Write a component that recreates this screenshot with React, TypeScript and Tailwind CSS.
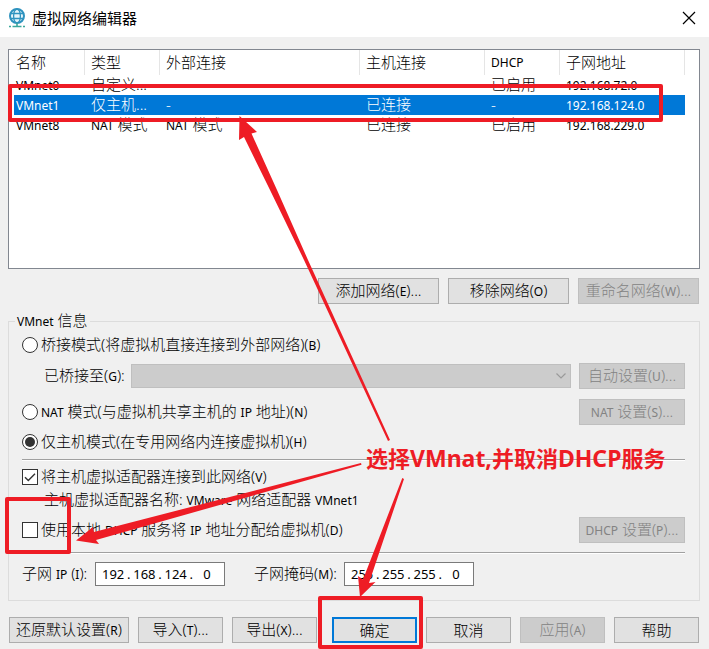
import type { ButtonHTMLAttributes, ReactNode } from "react";

/** Sets Latin letters and digits a little smaller than the Chinese text around them. */
function T({ children }: { children: string }) {
  return (
    <>
      {children.split(/([A-Za-z0-9][A-Za-z0-9.]*)/).map((part, i) =>
        i % 2 === 1 ? (
          <span key={i} className="text-[12px] font-normal">
            {part}
          </span>
        ) : (
          part
        ),
      )}
    </>
  );
}

type BtnProps = ButtonHTMLAttributes<HTMLButtonElement> & { label: string; primary?: boolean };

function Btn({ label, primary, className = "", ...rest }: BtnProps) {
  const look = primary
    ? "border-2 border-[#0078d7] bg-[#e1e1e1]"
    : "border border-[#adadad] bg-[#e1e1e1] disabled:border-[#bfbfbf] disabled:bg-[#cccccc] disabled:text-[#838383]";
  return (
    <button
      type="button"
      className={`flex h-[26px] items-center justify-center whitespace-nowrap leading-5 ${look} ${className}`}
      {...rest}
    >
      <span>
        <T>{label}</T>
      </span>
    </button>
  );
}

function Radio({ label, checked }: { label: string; checked?: boolean }) {
  return (
    <label className="flex items-center gap-[3px] whitespace-nowrap">
      <span className="relative flex size-4 items-center justify-center">
        <input
          type="radio"
          name="mode"
          defaultChecked={checked}
          className="peer size-4 appearance-none rounded-full border border-[#333333] bg-white"
        />
        <span className="pointer-events-none absolute hidden size-[10px] rounded-full bg-[#333333] peer-checked:block" />
      </span>
      <span>
        <T>{label}</T>
      </span>
    </label>
  );
}

function Check({ label, checked }: { label: string; checked?: boolean }) {
  return (
    <label className="flex items-center gap-[3px] whitespace-nowrap">
      <span className="relative flex size-4 items-center justify-center">
        <input
          type="checkbox"
          defaultChecked={checked}
          className="peer size-4 appearance-none border border-[#333333] bg-white"
        />
        <svg
          viewBox="0 0 16 16"
          className="pointer-events-none absolute hidden size-4 peer-checked:block"
          fill="none"
          stroke="#333333"
          strokeWidth="1.4"
        >
          <path d="M3 8.2 6.3 11.5 13 4.8" />
        </svg>
      </span>
      <span>
        <T>{label}</T>
      </span>
    </label>
  );
}

function IpField({ label, parts }: { label: string; parts: string[] }) {
  return (
    <div
      role="group"
      aria-label={label}
      className="flex h-6 w-[130px] items-center border border-[#7a7a7a] bg-white px-1 text-[13px] font-normal"
    >
      {parts.map((part, i) => (
        <span key={i} className="contents">
          {i > 0 && <span className="w-[5px] text-center">.</span>}
          <input
            aria-label={`${label} ${i + 1}`}
            defaultValue={part}
            className="h-5 w-0 flex-1 bg-transparent text-center outline-none"
          />
        </span>
      ))}
    </div>
  );
}

function Row({ className, children }: { className: string; children: ReactNode }) {
  return <div className={`flex items-center ${className}`}>{children}</div>;
}

function Rule({ className }: { className: string }) {
  return <hr className={`h-[2px] border-t border-b border-t-[#a0a0a0] border-b-white ${className}`} />;
}

const columns = [
  { title: "名称", width: "w-[71px]" },
  { title: "类型", width: "w-[75px]" },
  { title: "外部连接", width: "w-[200px]" },
  { title: "主机连接", width: "w-[125px]" },
  { title: "DHCP", width: "w-[75px]" },
  { title: "子网地址", width: "w-[125px]" },
];

const networks = [
  ["VMnet0", "自定义...", "", "", "已启用", "192.168.72.0"],
  ["VMnet1", "仅主机...", "-", "已连接", "-", "192.168.124.0"],
  ["VMnet8", "NAT 模式", "NAT 模式", "已连接", "已启用", "192.168.229.0"],
];

function GlobeIcon() {
  return (
    <svg viewBox="0 0 18 20" className="h-5 w-[18px]" fill="none">
      <circle cx="9" cy="8" r="7" fill="#e6f4fa" stroke="#2f93bf" strokeWidth="2" />
      <ellipse cx="9" cy="8" rx="3.4" ry="7" stroke="#2f93bf" strokeWidth="1.3" />
      <path d="M2 5.5h14M2 10.500h14" stroke="#2f93bf" strokeWidth="1.3" />
      <path d="M9 15v3" stroke="#3aa79b" strokeWidth="1.6" />
      <path d="M1 18.500h2M4.500 18.500h9M15 18.500h2" stroke="#3aa79b" strokeWidth="1.6" />
    </svg>
  );
}

function Annotations() {
  return (
    <div className="pointer-events-none absolute inset-0 overflow-hidden">
      <svg width="709" height="649" viewBox="0 0 709 649" className="absolute top-0 left-0">
        <g fill="none" stroke="#ee1c25" strokeWidth="4" strokeLinejoin="round">
          <rect x="10" y="86" width="651" height="34" />
          <rect x="7" y="499" width="62" height="53" />
          <rect x="320" y="598" width="101" height="49" />
        </g>
        <g fill="#ee1c25">
          <path d="M239.5 116 257 132 251.500 133.500 277 190 308 260 390 440 388 441 304 260 270 190 244 137 239 140Z" />
          <path d="M76 540.500 93 527 94 532 361 463 361.500 464.800 96 540 99 544Z" />
          <path d="M360 597 358 576 363 579.500 402.300 478 404 479 369 583 375.500 582Z" />
        </g>
      </svg>
      <p className="absolute top-[444px] left-[366px] text-[22px] leading-7 font-bold whitespace-nowrap text-[#ee1c25]">
        选择<span className="text-[23px]">VMnat,</span>并取消<span className="text-[23px]">DHCP</span>服务
      </p>
    </div>
  );
}

export default function App() {
  return (
    <div className="relative min-h-screen bg-[#f0f0f0] font-['Noto_Sans','Noto_Sans_CJK_SC',sans-serif] text-[15px] leading-5 font-light text-black">
      <header className="flex h-[37px] items-center bg-white pr-3 pb-[2px] pl-2">
        <GlobeIcon />
        <h1 className="ml-[6px] flex-1 font-normal">虚拟网络编辑器</h1>
        <button type="button" aria-label="关闭" className="flex size-4 items-center justify-center">
          <svg viewBox="0 0 14 14" className="size-[14px]" stroke="#000" strokeWidth="1.2">
            <path d="M1 1 13 13M13 1 1 13" />
          </svg>
        </button>
      </header>

      <main className="pt-3 pr-[10px] pl-[9px]">
        <div className="-mx-px h-[220px] overflow-hidden border border-[#828790] bg-white pl-[5px]">
          <table className="w-[671px] table-fixed border-separate border-spacing-0 text-left">
            <thead>
              <tr className="h-[25px]">
                {columns.map((c) => (
                  <th
                    key={c.title}
                    className={`border-r border-[#e5e5e5] p-0 pb-[2px] pl-[6px] font-light whitespace-nowrap first:pl-[2px] ${c.width}`}
                  >
                    <T>{c.title}</T>
                  </th>
                ))}
              </tr>
            </thead>
            <tbody>
              {networks.map((row, r) => (
                <tr key={row[0]} className={r === 1 ? "h-5 bg-[#0078d7] text-white" : "h-5"}>
                  {row.map((cell, i) => (
                    <td key={i} className="h-5 p-0 pl-[6px] leading-[18px] whitespace-nowrap first:pl-[2px]">
                      <div className="h-5">
                        <T>{cell}</T>
                      </div>
                    </td>
                  ))}
                </tr>
              ))}
            </tbody>
          </table>
        </div>

        <div className="mt-[9px] flex justify-end gap-[9px]">
          <Btn label="添加网络(E)..." className="w-[121px]" />
          <Btn label="移除网络(O)" className="w-[121px]" />
          <Btn label="重命名网络(W)..." className="w-[121px]" disabled />
        </div>

        <fieldset className="-mx-px mt-[7px] border border-[#dcdcdc] pr-[14px] pb-[6px] pl-[13px]">
          <legend className="-ml-[7px] h-5 px-[2px] leading-[18px]">
            <T>VMnet 信息</T>
          </legend>

          <Row className="h-7">
            <Radio label="桥接模式(将虚拟机直接连接到外部网络)(B)" />
          </Row>
          <Row className="h-[34px] pl-[22px]">
            <label htmlFor="bridge" className="w-[87px] whitespace-nowrap">
              <T>已桥接至(G):</T>
            </label>
            <div className="relative flex flex-1">
              <select
                id="bridge"
                disabled
                className="h-6 w-full appearance-none border border-[#bfbfbf] bg-[#cccccc] opacity-100"
              />
              <svg
                viewBox="0 0 12 8"
                className="pointer-events-none absolute top-2 right-1 h-2 w-3"
                fill="none"
                stroke="#9a9a9a"
                strokeWidth="1.2"
              >
                <path d="M1.500 1.500 6 6 10.500 1.500" />
              </svg>
            </div>
            <Btn label="自动设置(U)..." className="ml-2 w-[106px]" disabled />
          </Row>
          <Row className="h-[38px] justify-between">
            <Radio label="NAT 模式(与虚拟机共享主机的 IP 地址)(N)" />
            <Btn label="NAT 设置(S)..." className="w-[106px]" disabled />
          </Row>
          <Row className="h-[22px]">
            <Radio label="仅主机模式(在专用网络内连接虚拟机)(H)" checked />
          </Row>
          <Rule className="mt-[6px] mb-[3px]" />
          <Row className="h-[26px]">
            <Check label="将主机虚拟适配器连接到此网络(V)" checked />
          </Row>
          <Row className="h-5 pl-[22px]">
            <p>
              <T>主机虚拟适配器名称: VMware 网络适配器 VMnet1</T>
            </p>
          </Row>
          <Row className="h-10 justify-between">
            <Check label="使用本地 DHCP 服务将 IP 地址分配给虚拟机(D)" />
            <Btn label="DHCP 设置(P)..." className="w-[106px]" disabled />
          </Row>
          <Rule className="mt-[2px]" />
          <Row className="h-10">
            <span className="w-[73px] whitespace-nowrap">
              <T>子网 IP (I):</T>
            </span>
            <IpField label="子网 IP" parts={["192", "168", "124", "0"]} />
            <span className="ml-[29px] w-[90px] whitespace-nowrap">
              <T>子网掩码(M):</T>
            </span>
            <IpField label="子网掩码" parts={["255", "255", "255", "0"]} />
          </Row>
        </fieldset>

        <footer className="mt-4 flex justify-between pb-[6px]">
          <div className="flex gap-[9px]">
            <Btn label="还原默认设置(R)" className="w-[120px]" />
            <Btn label="导入(T)..." className="w-[85px]" />
            <Btn label="导出(X)..." className="w-[85px]" />
          </div>
          <div className="flex gap-[9px]">
            <Btn label="确定" className="w-[85px]" primary />
            <Btn label="取消" className="w-[85px]" />
            <Btn label="应用(A)" className="w-[85px]" disabled />
            <Btn label="帮助" className="w-[85px]" />
          </div>
        </footer>
      </main>

      <Annotations />
    </div>
  );
}
